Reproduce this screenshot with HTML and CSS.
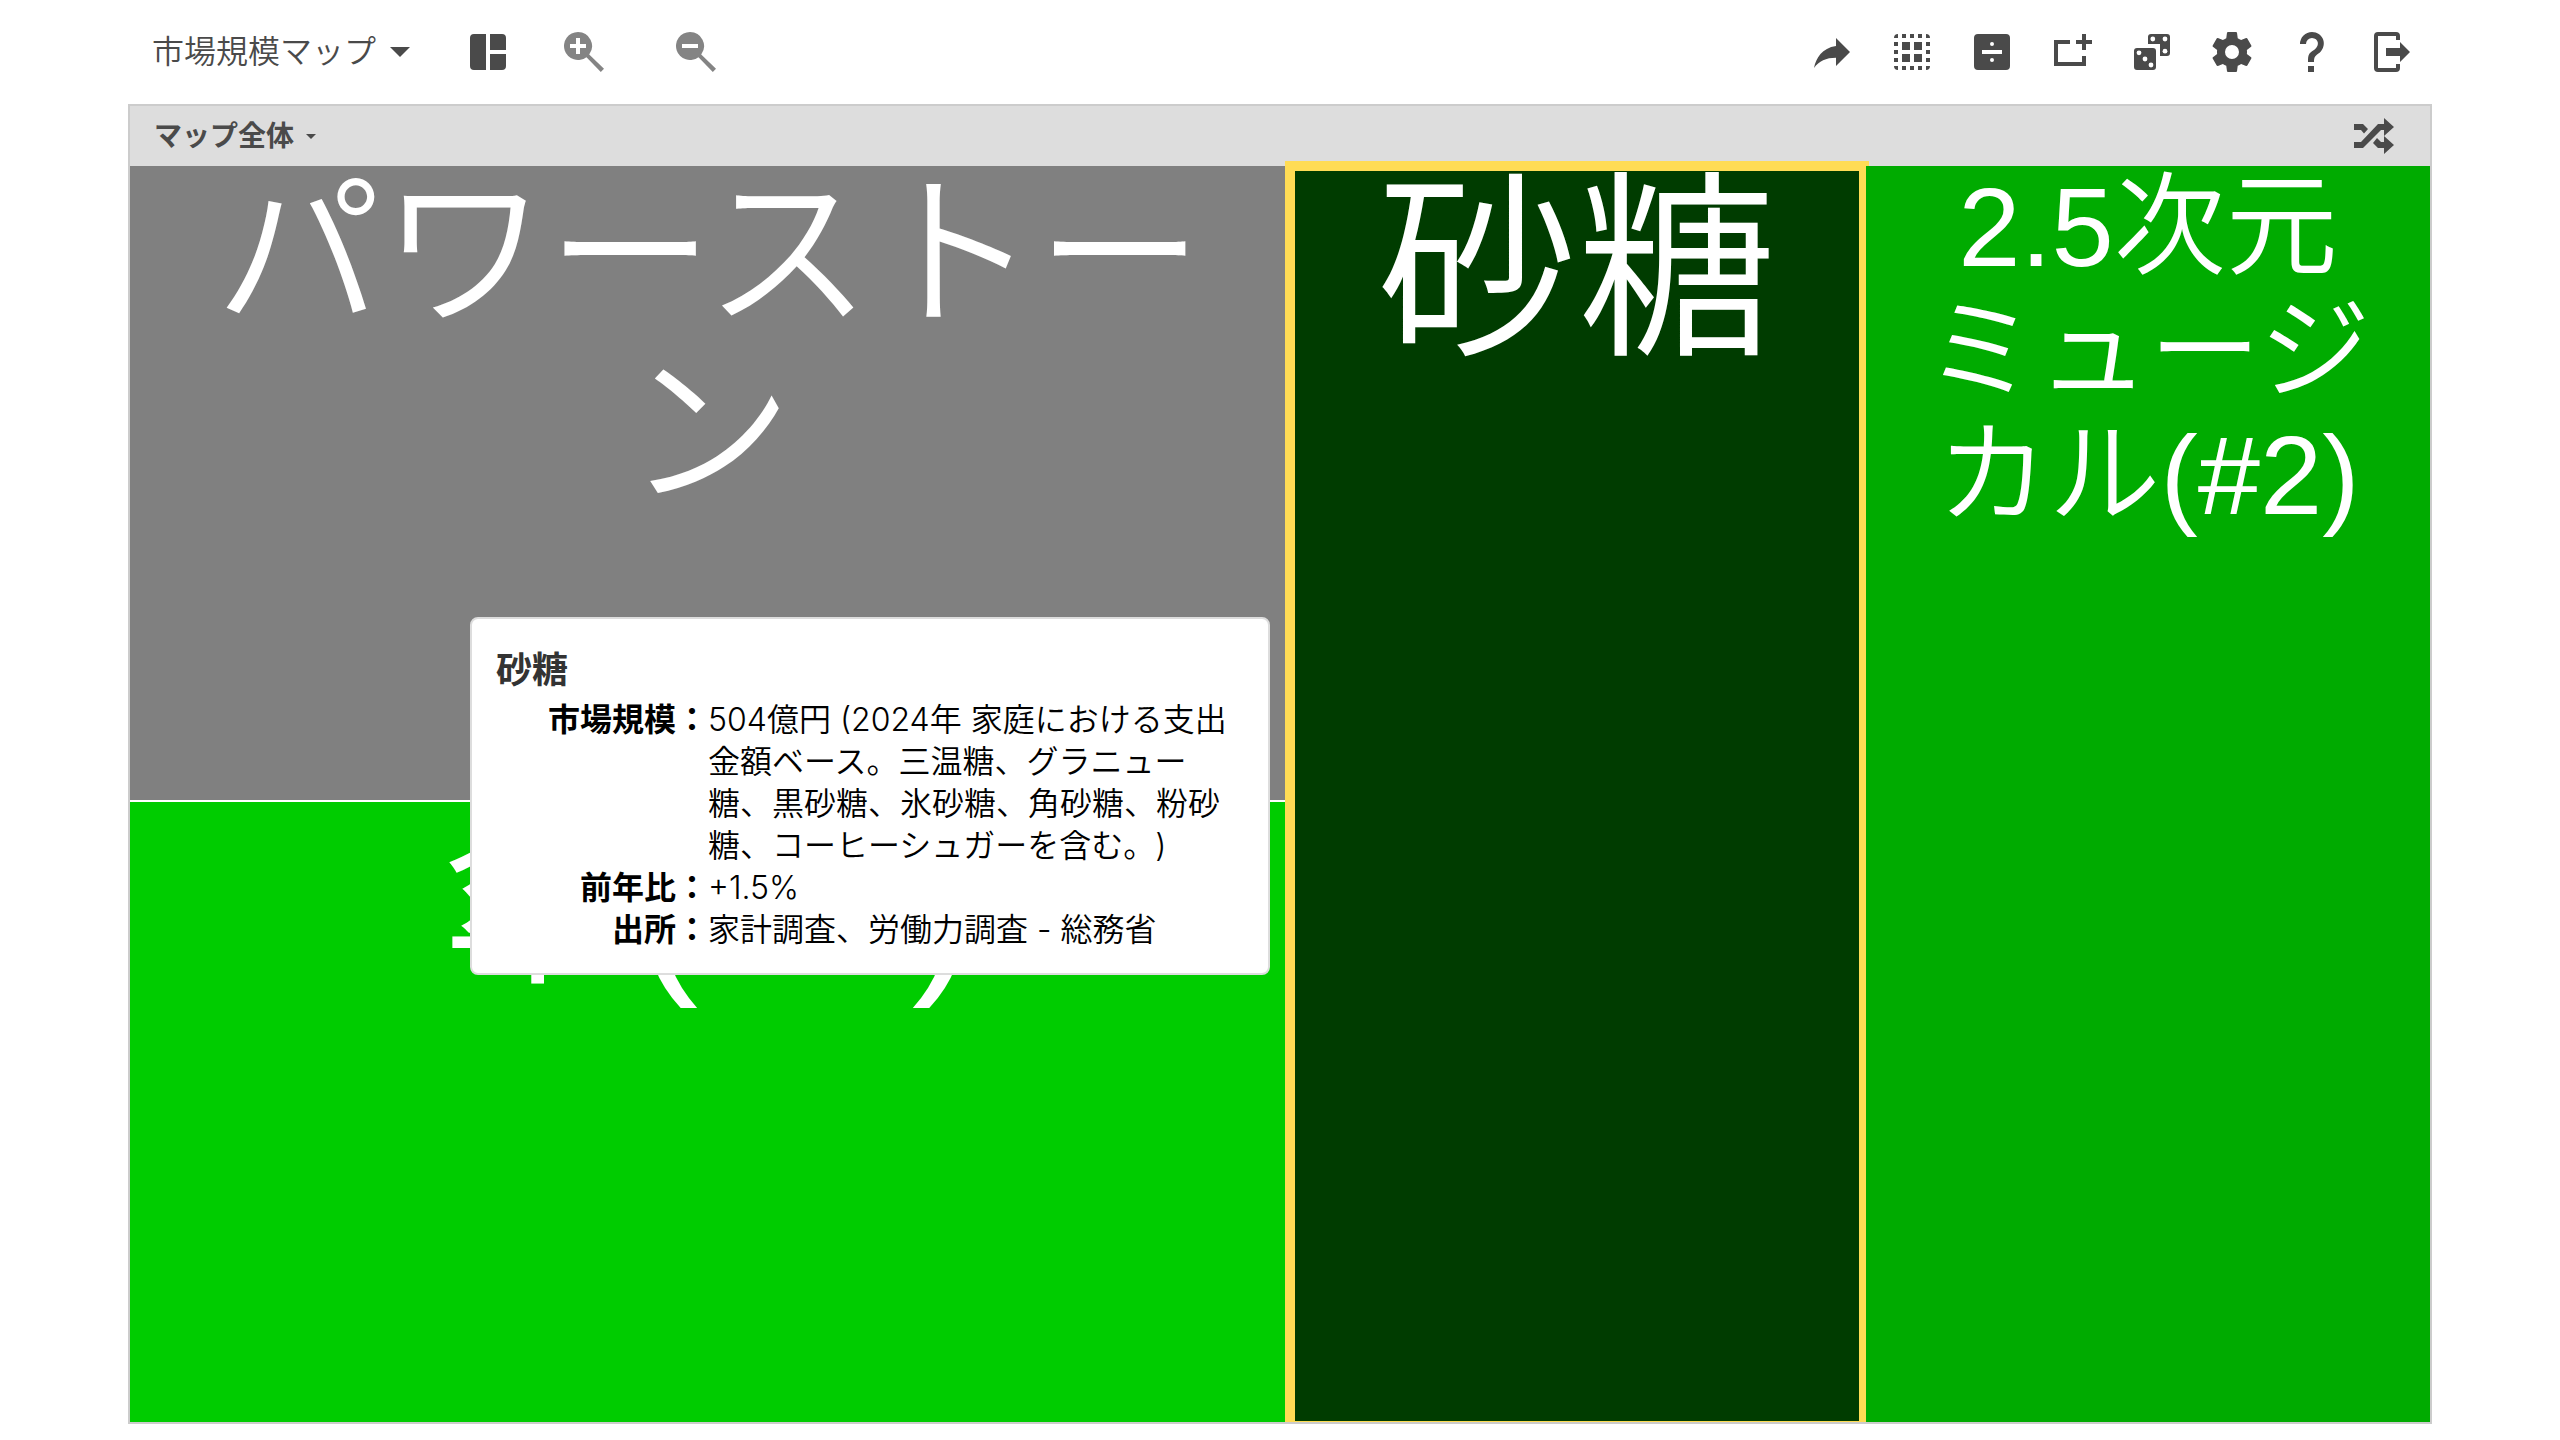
FILE: index.html
```html
<!DOCTYPE html>
<html lang="ja">
<head>
<meta charset="utf-8">
<meta name="viewport" content="width=device-width, initial-scale=1">
<title>市場規模マップ</title>
<link rel="stylesheet" href="styles.css">
</head>
<body>
<header class="toolbar">
  <button class="map-name" type="button">市場規模マップ<svg class="caret" viewBox="0 0 20 10"><path d="M0 0H20L10 10Z"/></svg></button>
  <button class="icon-button" type="button" aria-label="レイアウト"><svg viewBox="0 0 24 24"><path d="M5 3H11V21H5A2 2 0 0 1 3 19V5A2 2 0 0 1 5 3ZM13 3H19A2 2 0 0 1 21 5V11H13ZM13 13H21V19A2 2 0 0 1 19 21H13Z"/></svg></button>
  <div class="zoom-group">
    <button class="icon-button muted" type="button" aria-label="拡大"><svg viewBox="0 0 24 24"><path fill-rule="evenodd" d="M9 2A7 7 0 0 1 14.600 13.200L15 13.600L22 20.400L20.400 22L13.600 15L13.200 14.600A7 7 0 1 1 9 2ZM8 5V8H5V10H8V13H10V10H13V8H10V5Z"/></svg></button>
    <button class="icon-button muted" type="button" aria-label="縮小"><svg viewBox="0 0 24 24"><path fill-rule="evenodd" d="M9 2A7 7 0 0 1 14.600 13.200L15 13.600L22 20.400L20.400 22L13.600 15L13.200 14.600A7 7 0 1 1 9 2ZM5 8V10H13V8Z"/></svg></button>
  </div>
  <nav class="actions">
    <button class="icon-button" type="button" aria-label="共有"><svg viewBox="0 0 24 24"><path d="M21 12L14 5V9C7 10 4 15 3 20C5.500 16.500 9 14.900 14 14.900V19Z"/></svg></button>
    <button class="icon-button" type="button" aria-label="すべて選択"><svg viewBox="0 0 24 24"><path d="M7 7H11V11H7ZM13 7H17V11H13ZM7 13H11V17H7ZM13 13H17V17H13ZM7 3H9V5H7ZM11 3H13V5H11ZM15 3H17V5H15ZM7 19H9V21H7ZM11 19H13V21H11ZM15 19H17V21H15ZM3 7H5V9H3ZM3 11H5V13H3ZM3 15H5V17H3ZM19 7H21V9H19ZM19 11H21V13H19ZM19 15H21V17H19ZM5 3V5H3A2 2 0 0 1 5 3ZM19 3A2 2 0 0 1 21 5H19ZM21 19A2 2 0 0 1 19 21V19ZM5 21A2 2 0 0 1 3 19H5Z"/></svg></button>
    <button class="icon-button" type="button" aria-label="分割"><svg viewBox="0 0 24 24"><path fill-rule="evenodd" d="M5 3H19A2 2 0 0 1 21 5V19A2 2 0 0 1 19 21H5A2 2 0 0 1 3 19V5A2 2 0 0 1 5 3ZM7 11V13H17V11ZM12 7A1 1 0 1 0 12 9A1 1 0 1 0 12 7ZM12 15A1 1 0 1 0 12 17A1 1 0 1 0 12 15Z"/></svg></button>
    <button class="icon-button" type="button" aria-label="追加"><svg viewBox="0 0 24 24"><path d="M3 6H11V8H5V17H17V14H19V19H3ZM17 3H19V6H22V8H19V11H17V8H14V6H17Z"/></svg></button>
    <button class="icon-button" type="button" aria-label="ランダム"><svg viewBox="0 0 24 24"><path fill-rule="evenodd" d="M4.500 10H12.500A1.500 1.500 0 0 1 14 11.500V19.500A1.500 1.500 0 0 1 12.500 21H4.500A1.500 1.500 0 0 1 3 19.500V11.500A1.500 1.500 0 0 1 4.500 10ZM11.500 3H19.500A1.500 1.500 0 0 1 21 4.500V12.500A1.500 1.500 0 0 1 19.500 14H16V8H10V4.500A1.500 1.500 0 0 1 11.500 3Z"/><g class="pips"><circle cx="5.500" cy="12.400" r="1.200"/><circle cx="8.500" cy="15.500" r="1.200"/><circle cx="11.500" cy="18.500" r="1.200"/><circle cx="12.400" cy="5.500" r="1.200"/><circle cx="18.500" cy="5.500" r="1.200"/><circle cx="18.500" cy="11.600" r="1.200"/></g></svg></button>
    <button class="icon-button" type="button" aria-label="設定"><svg viewBox="0 0 24 24"><path d="M12,15.5A3.5,3.5 0 0,1 8.5,12A3.5,3.5 0 0,1 12,8.5A3.5,3.5 0 0,1 15.5,12A3.5,3.5 0 0,1 12,15.5M19.43,12.97C19.47,12.65 19.5,12.33 19.5,12C19.5,11.67 19.47,11.34 19.43,11L21.54,9.37C21.73,9.22 21.78,8.95 21.66,8.73L19.66,5.27C19.54,5.05 19.27,4.96 19.05,5.05L16.56,6.05C16.04,5.66 15.5,5.32 14.87,5.07L14.5,2.42C14.46,2.18 14.25,2 14,2H10C9.75,2 9.54,2.18 9.5,2.42L9.13,5.07C8.5,5.32 7.96,5.66 7.44,6.05L4.95,5.05C4.73,4.96 4.46,5.05 4.34,5.27L2.34,8.73C2.21,8.95 2.27,9.22 2.46,9.37L4.57,11C4.53,11.34 4.5,11.67 4.5,12C4.5,12.33 4.53,12.65 4.57,12.97L2.46,14.63C2.27,14.78 2.21,15.05 2.34,15.27L4.34,18.73C4.46,18.95 4.73,19.03 4.95,18.95L7.44,17.94C7.96,18.34 8.5,18.68 9.13,18.93L9.5,21.58C9.54,21.82 9.75,22 10,22H14C14.25,22 14.46,21.82 14.5,21.58L14.87,18.93C15.5,18.67 16.04,18.34 16.56,17.94L19.05,18.95C19.27,19.03 19.54,18.95 19.66,18.73L21.66,15.27C21.78,15.05 21.73,14.78 21.54,14.63L19.43,12.97Z"/></svg></button>
    <button class="icon-button" type="button" aria-label="ヘルプ"><svg viewBox="0 0 24 24"><path d="M10,19H13V22H10V19M12,2C17.35,2.22 19.68,7.62 16.5,11.67C15.67,12.67 14.33,13.33 13.67,14.17C13,15 13,16 13,17H10C10,15.33 10,13.92 10.67,12.92C11.33,11.92 12.67,11.33 13.5,10.67C15.92,8.43 15.32,5.26 12,5A3,3 0 0,0 9,8H6A6,6 0 0,1 12,2Z"/></svg></button>
    <button class="icon-button" type="button" aria-label="終了"><svg viewBox="0 0 24 24"><path d="M5 2H14A2 2 0 0 1 16 4V6H14V4H5V20H14V18H16V20A2 2 0 0 1 14 22H5A2 2 0 0 1 3 20V4A2 2 0 0 1 5 2ZM9 10H16V7L21 12L16 17V14H9Z"/></svg></button>
  </nav>
</header>
<main class="map">
  <div class="map-header">
    <button class="scope" type="button">マップ全体<svg class="caret-small" viewBox="0 0 10 5"><path d="M0 0H10L5 5Z"/></svg></button>
    <button class="shuffle" type="button" aria-label="シャッフル"><svg viewBox="0 0 40 36"><path d="M0 6H9L14 11L10 15.500L7 12H0ZM0 24H7L24 6H30V0L40 9L30 18V12H27L9 30H0ZM23 20L27 24H30V18L40 27L30 36V30H24L19 25Z"/></svg></button>
  </div>
  <div class="tiles">
    <div class="tile stone">パワーストーン</div>
    <div class="tile umbrella">傘(#2)</div>
    <div class="tile sugar">砂糖</div>
    <div class="tile musical">2.5次元ミュージカル(#2)</div>
    <aside class="tooltip" role="tooltip">
      <h2>砂糖</h2>
      <dl>
        <dt>市場規模：</dt><dd>504億円 (2024年 家庭における支出金額ベース。三温糖、グラニュー糖、黒砂糖、氷砂糖、角砂糖、粉砂糖、コーヒーシュガーを含む。)</dd>
        <dt>前年比：</dt><dd>+1.5%</dd>
        <dt>出所：</dt><dd>家計調査、労働力調査 - 総務省</dd>
      </dl>
    </aside>
  </div>
</main>
</body>
</html>
```
FILE: styles.css
```css
* {
  box-sizing: border-box;
}

body {
  display: flex;
  flex-direction: column;
  min-height: 100vh;
  margin: 0;
  padding: 0 5% 16px;
  background: #fff;
  color: #4a4a4a;
  font-family: Inter, "Noto Sans CJK JP", sans-serif;
  text-spacing-trim: space-all;
}

button {
  margin: 0;
  padding: 0;
  border: 0;
  background: none;
  color: inherit;
  font: inherit;
  cursor: pointer;
}

svg {
  display: block;
  fill: currentColor;
}

.toolbar {
  display: flex;
  align-items: center;
  height: 104px;
  padding: 0 16px 0 24px;
}

.map-name {
  display: flex;
  align-items: center;
  gap: 14px;
  margin-right: 54px;
  font-family: Inter, "Noto Sans CJK JP DemiLight", "Noto Sans CJK JP", sans-serif;
  font-size: 32px;
  font-weight: 350;
  line-height: 48px;
}

.caret {
  width: 20px;
  height: 10px;
}

.icon-button {
  width: 48px;
  height: 48px;
}

.pips {
  fill: #fff;
}

.muted {
  color: #848484;
}

.zoom-group {
  display: flex;
  gap: 64px;
  margin-left: 48px;
}

.actions {
  display: flex;
  gap: 32px;
  margin-left: auto;
}

.map {
  display: flex;
  flex: 1;
  flex-direction: column;
  border: 2px solid #ccc;
}

.map-header {
  display: flex;
  align-items: center;
  justify-content: space-between;
  height: 60px;
  padding: 0 36px 0 24px;
  background: #ddd;
}

.scope {
  display: flex;
  align-items: center;
  gap: 12px;
  font-size: 28px;
  font-weight: 700;
  line-height: 40px;
}

.caret-small {
  width: 10px;
  height: 5px;
}

.shuffle {
  width: 40px;
  height: 36px;
}

.tiles {
  position: relative;
  display: grid;
  flex: 1;
  grid-template-columns: 1158fr 574fr 564fr;
  grid-template-rows: 634fr 620fr;
  gap: 2px;
}

.tile {
  position: relative;
  min-width: 0;
  padding: 0 40px;
  color: #fff;
  font-family: "Liberation Sans", "Noto Sans CJK JP DemiLight", "Noto Sans CJK JP", sans-serif;
  text-align: center;
  word-break: break-all;
}

.stone {
  background: #808080;
  font-size: 166px;
  line-height: 178px;
  line-break: anywhere;
}

.umbrella {
  grid-row: 2;
  background: #00cc00;
  font-size: 192px;
  line-height: 200px;
}

.sugar {
  grid-row: 1 / 3;
  grid-column: 2;
  background: #003c00;
  font-size: 200px;
  line-height: 210px;
}

.sugar::after {
  position: absolute;
  inset: -5px -5px 0;
  border: solid #ffdc55;
  border-width: 10px 10px 1px;
  content: "";
}

.musical {
  grid-row: 1 / 3;
  grid-column: 3;
  background: #00ab00;
  font-size: 112px;
  line-height: 124px;
}

.tooltip {
  position: absolute;
  top: 451px;
  left: 340px;
  width: 800px;
  padding: 24px 24px 22px;
  border: 2px solid #ddd;
  border-radius: 8px;
  background: #fff;
  color: #000;
  font-size: 32px;
  line-height: 42px;
}

.tooltip h2 {
  margin: 0 0 2px;
  color: #333;
  font-size: 36px;
  line-height: 54px;
}

.tooltip dl {
  display: grid;
  grid-template-columns: 212px 1fr;
  margin: 0;
}

.tooltip dt {
  font-weight: 700;
  text-align: right;
}

.tooltip dd {
  margin: 0;
  font-family: Inter, "Noto Sans CJK JP DemiLight", "Noto Sans CJK JP", sans-serif;
  font-weight: 350;
}
```
